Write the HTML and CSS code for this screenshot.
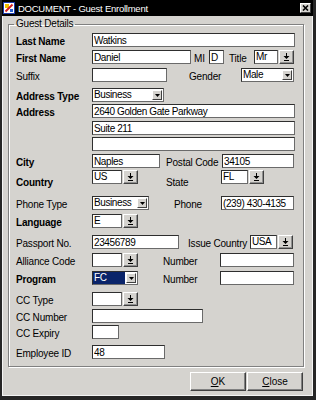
FILE: index.html
```html
<!DOCTYPE html>
<html lang="en">
<head>
  <meta charset="UTF-8" />
  <title>DOCUMENT - Guest Enrollment</title>
  <link rel="stylesheet" href="styles.css">
</head>
<body>
  <div class="window">
    <div class="title-bar">
      <svg class="app-icon" viewBox="0 0 12 12">
        <rect x="0.5" y="0.5" width="11" height="11" fill="#fff" stroke="#1c3aa8"/>
        <rect x="2" y="2" width="4" height="4" fill="#f2c200"/>
        <path d="M2.5 9.5 L9.5 2.5" stroke="#d42020" stroke-width="2"/>
        <rect x="7" y="7" width="3" height="3" fill="#2a60d0"/>
      </svg>
      <span class="title">DOCUMENT - Guest Enrollment</span>
      <button class="close-x" aria-label="Close">
        <svg viewBox="0 0 7 6"><path d="M1 0.5 L6 5.5 M6 0.5 L1 5.5" stroke="#000" stroke-width="1.6"/></svg>
      </button>
    </div>

    <fieldset class="group">
      <legend>Guest Details</legend>
      <div class="rows">
        <!-- name -->
        <div class="row">
          <label class="lbl b">Last Name</label>
          <input class="w203" value="Watkins">
        </div>
        <div class="row m3">
          <label class="lbl b">First Name</label>
          <input class="w99" value="Daniel">
          <span class="sub ml3 w15">MI</span>
          <input class="w15" value="D">
          <span class="sub ml5 w25">Title</span>
          <div class="lov"><span class="lov-box w24">Mr</span><span class="lov-btn"><svg viewBox="0 0 7 8"><path d="M3 0h1v3h-1z M0.5 3h6l-3 3z M1 7h5v1h-5z"/></svg></span></div>
        </div>
        <div class="row m4">
          <label class="lbl">Suffix</label>
          <input class="w75" value="">
          <span class="sub ml22 w52">Gender</span>
          <div class="combo w53"><span class="combo-val">Male</span><span class="combo-btn"><svg viewBox="0 0 5 3"><path d="M0 0h5l-2.5 3z"/></svg></span></div>
        </div>

        <!-- address -->
        <div class="row m6">
          <label class="lbl b">Address Type</label>
          <div class="combo w72"><span class="combo-val">Business</span><span class="combo-btn"><svg viewBox="0 0 5 3"><path d="M0 0h5l-2.5 3z"/></svg></span></div>
        </div>
        <div class="row m2">
          <label class="lbl b">Address</label>
          <input class="w203" value="2640 Golden Gate Parkway">
        </div>
        <div class="row m3">
          <span class="lbl"></span>
          <input class="w203" value="Suite 211">
        </div>
        <div class="row m2">
          <span class="lbl"></span>
          <input class="w203" value="">
        </div>
        <div class="row m3">
          <label class="lbl b">City</label>
          <input class="w68" value="Naples">
          <span class="sub ml6 w56">Postal Code</span>
          <input class="w72" value="34105">
        </div>
        <div class="row m2 low">
          <label class="lbl b">Country</label>
          <div class="lov"><span class="lov-box w30">US</span><span class="lov-btn"><svg viewBox="0 0 7 8"><path d="M3 0h1v3h-1z M0.5 3h6l-3 3z M1 7h5v1h-5z"/></svg></span></div>
          <span class="sub ml28 w55">State</span>
          <div class="lov"><span class="lov-box w27">FL</span><span class="lov-btn w14"><svg viewBox="0 0 7 8"><path d="M3 0h1v3h-1z M0.5 3h6l-3 3z M1 7h5v1h-5z"/></svg></span></div>
        </div>

        <!-- contact -->
        <div class="row m12">
          <label class="lbl">Phone Type</label>
          <div class="combo w57"><span class="combo-val">Business</span><span class="combo-btn"><svg viewBox="0 0 5 3"><path d="M0 0h5l-2.5 3z"/></svg></span></div>
          <span class="sub ml25 w47">Phone</span>
          <input class="w73" value="(239) 430-4135">
        </div>
        <div class="row m4">
          <label class="lbl b">Language</label>
          <div class="lov"><span class="lov-box w30">E</span><span class="lov-btn"><svg viewBox="0 0 7 8"><path d="M3 0h1v3h-1z M0.5 3h6l-3 3z M1 7h5v1h-5z"/></svg></span></div>
        </div>
        <div class="row m7">
          <label class="lbl">Passport No.</label>
          <input class="w87" value="23456789">
          <span class="sub ml9 w62">Issue Country</span>
          <div class="lov"><span class="lov-box w27">USA</span><span class="lov-btn"><svg viewBox="0 0 7 8"><path d="M3 0h1v3h-1z M0.5 3h6l-3 3z M1 7h5v1h-5z"/></svg></span></div>
        </div>

        <!-- membership -->
        <div class="row m4">
          <label class="lbl">Alliance Code</label>
          <div class="lov"><span class="lov-box w30"></span><span class="lov-btn"><svg viewBox="0 0 7 8"><path d="M3 0h1v3h-1z M0.5 3h6l-3 3z M1 7h5v1h-5z"/></svg></span></div>
          <span class="sub ml25 w57">Number</span>
          <input class="w74" value="">
        </div>
        <div class="row m4">
          <label class="lbl b">Program</label>
          <div class="combo w46"><span class="combo-val hl">FC</span><span class="combo-btn"><svg viewBox="0 0 5 3"><path d="M0 0h5l-2.5 3z"/></svg></span></div>
          <span class="sub ml25 w57">Number</span>
          <input class="w74" value="">
        </div>

        <!-- credit card -->
        <div class="row m7">
          <label class="lbl">CC Type</label>
          <div class="lov"><span class="lov-box w30"></span><span class="lov-btn"><svg viewBox="0 0 7 8"><path d="M3 0h1v3h-1z M0.5 3h6l-3 3z M1 7h5v1h-5z"/></svg></span></div>
        </div>
        <div class="row m3">
          <label class="lbl">CC Number</label>
          <input class="w111" value="">
        </div>
        <div class="row m2">
          <label class="lbl">CC Expiry</label>
          <input class="w27" value="">
        </div>
        <div class="row m6">
          <label class="lbl">Employee ID</label>
          <input class="w73" value="48">
        </div>
      </div>
    </fieldset>

    <div class="actions">
      <button class="btn"><u>O</u>K</button>
      <button class="btn"><u>C</u>lose</button>
    </div>
  </div>
</body>
</html>
```

FILE: styles.css
```css
* { box-sizing: border-box; margin: 0; padding: 0; }
body {
  font-family: "Liberation Sans", Arial, sans-serif;
  font-size: 10px;
  letter-spacing: -0.2px;
  color: #000;
  background: #d5d3cf;
}
.window {
  width: 316px;
  height: 400px;
  background: #d5d3cf;
  border-left: 2px solid #262626;
  border-right: 3px solid #262626;
  border-bottom: 4px solid #262626;
  box-shadow: inset 1px 0 0 #f4f4f4, inset -1px -1px 0 #f4f4f4;
}

/* title bar */
.title-bar {
  display: flex;
  align-items: center;
  height: 16px;
  background: #000;
  color: #fff;
  padding: 0 2px 0 1px;
}
.app-icon {
  width: 12px;
  height: 12px;
  flex-shrink: 0;
}
.title {
  flex: 1;
  margin-left: 3px;
  font-size: 9.5px;
  letter-spacing: -0.25px;
  white-space: nowrap;
}
.close-x {
  width: 11px;
  height: 10px;
  display: flex;
  align-items: center;
  justify-content: center;
  background: #d5d3cf;
  border: 1px solid;
  border-color: #fff #404040 #404040 #fff;
}
.close-x svg {
  width: 7px;
  height: 6px;
}

/* group box */
.group {
  margin: 2px 9px 0 6px;
  border: 1px solid #808080;
  box-shadow: 1px 1px 0 #fff, inset 1px 1px 0 #fff;
  min-width: 0;
}
.group legend {
  margin-left: 5px;
  padding: 0 2px;
  line-height: 12px;
}
.rows {
  padding: 3px 0 7px 7px;
}
.row {
  display: flex;
  align-items: center;
  height: 14px;
}
.m2 { margin-top: 2px; }
.m3 { margin-top: 3px; }
.m4 { margin-top: 4px; }
.m6 { margin-top: 6px; }
.m7 { margin-top: 7px; }
.m12 { margin-top: 12px; }

.lbl {
  width: 76px;
  flex-shrink: 0;
  margin-top: 3px;
  white-space: nowrap;
}
.lbl.b { font-weight: bold; }
.sub {
  flex-shrink: 0;
  margin-top: 3px;
  white-space: nowrap;
}
.low .lbl, .low .sub { margin-top: 11px; }
.ml3 { margin-left: 3px; }
.ml5 { margin-left: 5px; }
.ml6 { margin-left: 6px; }
.ml9 { margin-left: 9px; }
.ml22 { margin-left: 22px; }
.ml25 { margin-left: 25px; }
.ml28 { margin-left: 28px; }

/* widths */
.w14 { width: 14px; }
.w15 { width: 15px; }
.w24 { width: 24px; }
.w25 { width: 25px; }
.w27 { width: 27px; }
.w30 { width: 30px; }
.w46 { width: 46px; }
.w47 { width: 47px; }
.w52 { width: 52px; }
.w53 { width: 53px; }
.w55 { width: 55px; }
.w56 { width: 56px; }
.w57 { width: 57px; }
.w62 { width: 62px; }
.w68 { width: 68px; }
.w72 { width: 72px; }
.w73 { width: 73px; }
.w74 { width: 74px; }
.w75 { width: 75px; }
.w87 { width: 87px; }
.w99 { width: 99px; }
.w111 { width: 111px; }
.w203 { width: 203px; }

/* text fields */
input, .lov-box, .combo {
  height: 14px;
  flex-shrink: 0;
  background: #fff;
  border: 1px solid;
  border-color: #2e2e2e #6a6a6a #6a6a6a #2e2e2e;
  font: inherit;
  letter-spacing: -0.4px;
  color: #000;
  padding: 0 1px;
  line-height: 12px;
  outline: none;
}

/* list of values field */
.lov {
  display: flex;
  gap: 1px;
  flex-shrink: 0;
}
.lov-btn {
  width: 15px;
  height: 14px;
  display: flex;
  align-items: center;
  justify-content: center;
  background: #d5d3cf;
  border: 1px solid;
  border-color: #fff #404040 #404040 #fff;
  box-shadow: inset -1px -1px 0 #909090;
}
.lov-btn svg {
  width: 7px;
  height: 8px;
  fill: #000;
}

/* drop-down combo */
.combo {
  display: flex;
  align-items: center;
  padding: 0;
}
.combo-val {
  flex: 1;
  padding-left: 1px;
  white-space: nowrap;
  overflow: hidden;
}
.combo-val.hl {
  align-self: stretch;
  margin: 0 1px 0 0;
  background: #0a246a;
  color: #fff;
}
.combo-btn {
  width: 10px;
  height: 10px;
  margin-right: 1px;
  display: flex;
  align-items: center;
  justify-content: center;
  background: #d5d3cf;
  border: 1px solid;
  border-color: #fff #404040 #404040 #fff;
}
.combo-btn svg {
  width: 5px;
  height: 3px;
  fill: #000;
}

/* buttons */
.actions {
  display: flex;
  justify-content: flex-end;
  gap: 1px;
  margin: 5px 10px 0 0;
}
.btn {
  width: 56px;
  height: 19px;
  font: inherit;
  color: #000;
  background: #d5d3cf;
  border: 1px solid;
  border-color: #fff #404040 #404040 #fff;
  box-shadow: inset -1px -1px 0 #808080;
}
```
